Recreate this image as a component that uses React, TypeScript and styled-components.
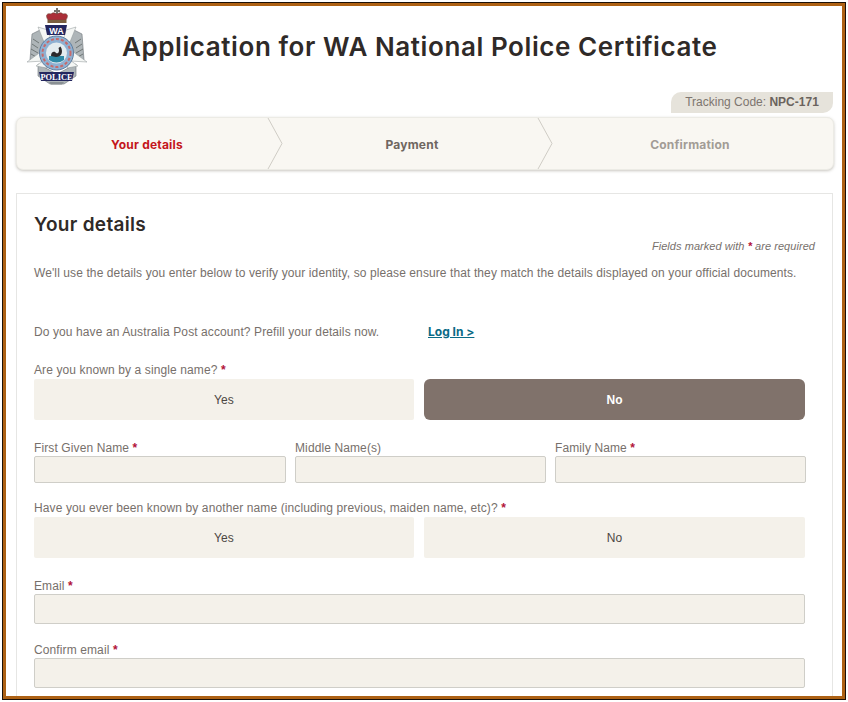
import styled, { createGlobalStyle } from 'styled-components'

const GlobalStyle = createGlobalStyle`
  html, body {
    margin: 0;
    padding: 0;
    background: #fff;
    overflow: hidden;
  }
  * {
    box-sizing: border-box;
  }
`

const Frame = styled.div`
  margin: 2px;
  width: 844px;
  height: 698px;
  border: 1px solid #1a1008;
  overflow: hidden;
`

const Page = styled.div`
  height: 100%;
  border: 3px solid #ad6114;
  background: #fff;
  overflow: hidden;
  font-family: 'Liberation Sans', Arial, sans-serif;
  font-size: 12px;
  color: #77706b;
`

const Header = styled.header`
  display: flex;
  align-items: flex-start;
  height: 86px;
  padding: 2px 0 0 20px;
`

const Title = styled.h1`
  margin: 24px 0 0 34px;
  font-family: 'Inter', sans-serif;
  font-size: 26px;
  line-height: 30px;
  font-weight: 600;
  letter-spacing: 0.58px;
  white-space: nowrap;
  color: #2f2a28;
`

const TrackingRow = styled.div`
  display: flex;
  justify-content: flex-end;
  padding-right: 9px;
`

const Tracking = styled.div`
  width: 162px;
  height: 21px;
  line-height: 21px;
  text-align: center;
  background: #e6e3db;
  border-radius: 10px 0 10px 0;
  color: #7d756f;
  b {
    color: #6b635d;
  }
`

const Steps = styled.nav`
  display: flex;
  width: 818px;
  height: 53px;
  margin: 4px 0 23px 10px;
  background: #f9f7f2;
  border: 1px solid #ecebe5;
  border-radius: 7px;
  box-shadow: 0 1px 3px rgba(120, 115, 100, 0.4);
`

const Step = styled.div<{ $width: number; $color: string }>`
  position: relative;
  width: ${p => p.$width}px;
  display: flex;
  align-items: center;
  justify-content: center;
  padding-top: 2px;
  font-family: 'Inter', sans-serif;
  font-size: 12px;
  font-weight: 700;
  letter-spacing: 0.2px;
  color: ${p => p.$color};
`

const Chevron = styled.svg`
  position: absolute;
  top: 0;
  right: -6px;
  width: 16px;
  height: 51px;
`

const Panel = styled.section`
  width: 817px;
  height: 520px;
  margin-left: 10px;
  padding: 20px 27px 0 17px;
  border: 1px solid #e6e6e4;
  border-bottom: none;
`

const Heading = styled.h2`
  margin: 0;
  font-family: 'Inter', sans-serif;
  font-size: 19px;
  font-weight: 600;
  line-height: 22px;
  letter-spacing: 0.3px;
  color: #2f2a28;
`

const Required = styled.p`
  margin: 3px -10px 0 0;
  font-size: 11px;
  line-height: 14px;
  font-style: italic;
  letter-spacing: 0.05px;
  text-align: right;
  color: #77706b;
`

const Intro = styled.p`
  margin: 13px 0 0;
  line-height: 14px;
  letter-spacing: 0.1px;
  white-space: nowrap;
`

const Prefill = styled.div`
  display: flex;
  margin-top: 45px;
  line-height: 14px;
  letter-spacing: 0.1px;
`

const PrefillText = styled.span`
  width: 394px;
`

const LogIn = styled.a`
  font-family: 'Inter', sans-serif;
  font-size: 12px;
  font-weight: 700;
  letter-spacing: 0;
  color: #0a6a86;
  text-decoration: underline;
`

const Label = styled.label`
  display: block;
  height: 14px;
  line-height: 16px;
  letter-spacing: 0.11px;
`

const Star = styled.span`
  font-weight: 700;
  color: #b2133a;
`

const Question = styled.div<{ $top: number }>`
  margin-top: ${p => p.$top}px;
`

const ToggleRow = styled.div`
  display: grid;
  grid-template-columns: 380px 381px;
  column-gap: 10px;
  margin-top: 3px;
`

const Toggle = styled.button<{ $active?: boolean }>`
  height: 41px;
  padding: 0;
  border: none;
  border-radius: ${p => (p.$active ? '6px' : '2px')};
  background: ${p => (p.$active ? '#80726b' : '#f4f1ea')};
  color: ${p => (p.$active ? '#fff' : '#4c4743')};
  font-family: inherit;
  font-size: 12px;
  font-weight: ${p => (p.$active ? 700 : 400)};
  letter-spacing: 0.11px;
`

const NameRow = styled.div`
  display: grid;
  grid-template-columns: 252px 251px 251px;
  column-gap: 9px;
  margin-top: 20px;
`

const Input = styled.input<{ $height?: number }>`
  display: block;
  width: 100%;
  height: ${p => p.$height ?? 27}px;
  margin-top: 2px;
  padding: 0 6px;
  background: #f4f1ea;
  border: 1px solid #cfcec8;
  border-radius: 2px;
  outline: none;
`

const Logo = () => (
  <svg width="62" height="78" viewBox="0 0 62 78" aria-hidden="true">
    {/* silver wreath sides and foot */}
    <g fill="#aeb5b8" stroke="#6d7478" strokeWidth="0.6">
      <path d="M6 26 L14 22 L20 34 L14 52 L4 52 Z" />
      <path d="M56 26 L48 22 L42 34 L48 52 L58 52 Z" />
      <path d="M12 56 L31 66 L50 56 L50 68 L38 76 H24 L12 68 Z" />
    </g>
    <g stroke="#545c5a" strokeWidth="0.7" fill="none">
      <path d="M7 31 L13 35 M6 36 L12 40 M5 41 L12 45 M5 46 L12 50" />
      <path d="M55 31 L49 35 M56 36 L50 40 M57 41 L50 45 M57 46 L50 50" />
    </g>
    {/* white star points */}
    <g fill="#f4f6f4" stroke="#8d9496" strokeWidth="0.5">
      <path d="M12 19 L22 22 L26 36 L18 34 Z" />
      <path d="M50 19 L40 22 L36 36 L44 34 Z" />
      <path d="M1 54 L16 43 L18 53 Z" />
      <path d="M61 54 L46 43 L44 53 Z" />
      <path d="M10 58 L18 52 L21 60 Z" />
      <path d="M52 58 L44 52 L41 60 Z" />
    </g>
    {/* centre medallion */}
    <circle cx="30.5" cy="45" r="17" fill="#8fb1d2" stroke="#5f7c9e" strokeWidth="1" />
    <circle
      cx="30.5"
      cy="45"
      r="14"
      fill="none"
      stroke="#c76a6a"
      strokeWidth="2"
      strokeDasharray="3 2"
    />
    <circle cx="30.5" cy="45" r="10.5" fill="#e4ecef" />
    <path d="M23 48 H38 V52 Q30.5 57 23 52 Z" fill="#2e8aa6" />
    <path
      d="M25 48 C25 43 29 43 30 45 C32 46 34 44 32.5 40 L34.5 38.5 L35.5 40.5 C37 45 35 49 30 49 Z"
      fill="#2c2a2c"
    />
    {/* crown */}
    <path d="M30 0 H32 V2 H34 V4 H32 V6 H30 V4 H28 V2 H30 Z" fill="#77716a" />
    <path
      d="M22 12 C19 7 21 5 25 6 C27 4 29 5 31 6 C33 5 35 4 37 6 C41 5 43 7 40 12 Z"
      fill="#ab2f38"
      stroke="#6f4a3c"
      strokeWidth="0.6"
    />
    <rect x="21.5" y="12" width="19" height="3" fill="#7b5f3e" />
    {/* WA banner */}
    <path d="M19 17 H41 L39 27 H21 Z" fill="#24275f" />
    <text
      x="30.5"
      y="25.8"
      textAnchor="middle"
      fontFamily="'Liberation Sans', sans-serif"
      fontSize="9"
      fontWeight="700"
      fill="#fff"
    >
      WA
    </text>
    {/* POLICE banner */}
    <path d="M13 64 H48 L46 73 H15 Z" fill="#24275f" />
    <text
      x="30.5"
      y="71.8"
      textAnchor="middle"
      fontFamily="'Liberation Serif', serif"
      fontSize="8.4"
      fontWeight="700"
      fill="#fff"
    >
      POLICE
    </text>
    <path d="M23 74 H38 L36 76.5 H25 Z" fill="#8a9094" />
  </svg>
)

const StepArrow = () => (
  <Chevron viewBox="0 0 16 51" aria-hidden="true">
    <path d="M1 0 L15 25.5 L1 51 H0 V0 Z" fill="#f9f7f2" />
    <path d="M1 0 L15 25.5 L1 51" fill="none" stroke="#cfccc5" strokeWidth="1" />
  </Chevron>
)

const App = () => {
  return (
    <Frame>
      <GlobalStyle />
      <Page>
        <Header>
          <Logo />
          <Title>Application for WA National Police Certificate</Title>
        </Header>
        <TrackingRow>
          <Tracking>
            Tracking Code: <b>NPC-171</b>
          </Tracking>
        </TrackingRow>
        <Steps>
          <Step $width={260} $color="#c4161c">
            Your details
            <StepArrow />
          </Step>
          <Step $width={270} $color="#6e6660">
            Payment
            <StepArrow />
          </Step>
          <Step $width={286} $color="#a29c96">
            Confirmation
          </Step>
        </Steps>
        <Panel>
          <Heading>Your details</Heading>
          <Required>
            Fields marked with <Star>*</Star> are required
          </Required>
          <Intro>
            We'll use the details you enter below to verify your identity, so please ensure that
            they match the details displayed on your official documents.
          </Intro>
          <Prefill>
            <PrefillText>Do you have an Australia Post account? Prefill your details now.</PrefillText>
            <LogIn href="#">Log In &gt;</LogIn>
          </Prefill>
          <Question $top={23}>
            <Label>
              Are you known by a single name? <Star>*</Star>
            </Label>
            <ToggleRow>
              <Toggle>Yes</Toggle>
              <Toggle $active>No</Toggle>
            </ToggleRow>
          </Question>
          <NameRow>
            <div>
              <Label>
                First Given Name <Star>*</Star>
              </Label>
              <Input />
            </div>
            <div>
              <Label>Middle Name(s)</Label>
              <Input />
            </div>
            <div>
              <Label>
                Family Name <Star>*</Star>
              </Label>
              <Input />
            </div>
          </NameRow>
          <Question $top={17}>
            <Label>
              Have you ever been known by another name (including previous, maiden name, etc)?{' '}
              <Star>*</Star>
            </Label>
            <ToggleRow>
              <Toggle>Yes</Toggle>
              <Toggle>No</Toggle>
            </ToggleRow>
          </Question>
          <Question $top={20}>
            <Label>
              Email <Star>*</Star>
            </Label>
            <Input $height={30} />
          </Question>
          <Question $top={18}>
            <Label>
              Confirm email <Star>*</Star>
            </Label>
            <Input $height={30} />
          </Question>
        </Panel>
      </Page>
    </Frame>
  )
}

export default App
